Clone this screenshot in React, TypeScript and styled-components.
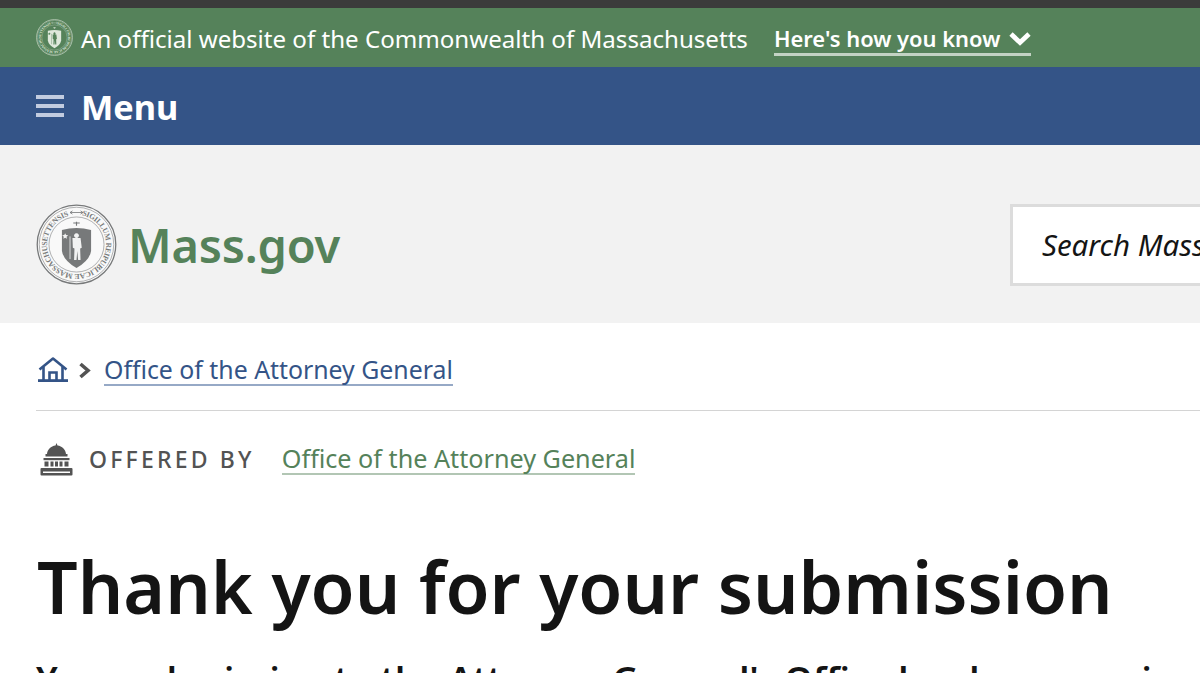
import { FC } from "react";
import styled, { createGlobalStyle } from "styled-components";

const GlobalStyle = createGlobalStyle`
    html, body {
        margin: 0;
        height: 673px;
        overflow: hidden;
        background: #fff;
    }
    body {
        font-family: "Noto Sans", "Open Sans", sans-serif;
        color: #141414;
    }
`;

const Seal: FC<{ size: number; color: string; fill: string; id: string; inner: string }> = ({ size, color, fill, id, inner }) => (
    <svg width={size} height={size} viewBox="0 0 100 100" aria-hidden="true">
        <circle cx="50" cy="50" r="48.5" fill={fill} stroke={color} strokeWidth="1.6" />
        <circle cx="50" cy="50" r="46" fill="none" stroke={color} strokeWidth="0.7" />
        <circle cx="50" cy="50" r="34" fill="none" stroke={color} strokeWidth="0.7" />
        <defs>
            <path id={id} d="M50 13.500a36.500 36.500 0 1 1 -.01 0" />
        </defs>
        <text fontFamily="Liberation Serif, serif" fontSize="9.5" fontWeight="700" fill={color} textLength="212">
            <textPath href={`#${id}`} startOffset="3%" textLength="212">SIGILLUM REIPUBLICAE MASSACHUSETTENSIS</textPath>
        </text>
        <path d="M42 10.500h16M45 8.500l-3 2 3 2M55 8.500l3 2-3 2" fill="none" stroke={color} strokeWidth="1" />
        <path d="M32 32 Q50 27 68 32 L68 58 Q66 70 50 79 Q34 70 32 58 Z" fill={color} />
        <path d="M50 36a3 3 0 1 1 -.01 0Z M45 42h10l1.500 12-2 1 .5 14h-3l-1-11-1 11h-3l.5-14-2-1Z" fill={inner} />
        <path d="M42 40v28" stroke={inner} strokeWidth="1" />
        <path d="M36 36l1.100 2.400 2.600.3-2 1.700.6 2.600-2.300-1.300-2.300 1.300.6-2.600-2-1.700 2.600-.3Z" fill={inner} />
        <path d="M50 27v-5M46 23.500h8" stroke={color} strokeWidth="1.400" />
    </svg>
);

const HomeIcon: FC = () => (
    <svg width="30" height="25" viewBox="0 0 30 25" fill="none" stroke="#345487" strokeWidth="2.600" aria-hidden="true">
        <path d="M1.500 12.500 15 1.500l13.500 11" strokeLinejoin="round" />
        <path d="M5.500 10V23.500M24.500 10V23.500" />
        <path d="M11.500 23.500V15.500h7v8" />
        <path d="M0 23.600h30" strokeWidth="2.800" />
    </svg>
);

const CapitolIcon: FC = () => (
    <svg width="33" height="33" viewBox="0 0 33 33" fill="#535353" aria-hidden="true">
        <path d="M16.500 0l1 2.600c4.600.6 8 4 8.500 8.400h1.500v2.500H5.500V11H7c.5-4.400 3.900-7.800 8.500-8.400Z" />
        <path d="M3.500 15h26v2.200h-26Z" />
        <path d="M4.500 18.500h4v5h-4ZM10.500 18.500h3v5h-3ZM15 18.500h3v5h-3ZM19.500 18.500h3v5h-3ZM24.500 18.500h4v5h-4Z" />
        <path d="M1.500 25h30a1 1 0 0 1 1 1v5.500a1 1 0 0 1-1 1h-30a1 1 0 0 1-1-1V26a1 1 0 0 1 1-1Zm1.500 3.500v1.500h27v-1.500Z" />
    </svg>
);

const App: FC = () => (
    <Page>
        <GlobalStyle />
        <TopEdge />
        <OfficialBar>
            <Seal size={37} color="#dfe8dc" fill="#55825a" id="seal-small" inner="#55825a" />
            <OfficialText>An official website of the Commonwealth of Massachusetts</OfficialText>
            <KnowLink>
                Here's how you know
                <svg width="22" height="15" viewBox="0 0 22 15" fill="none" stroke="#fff" strokeWidth="4.800" aria-hidden="true">
                    <path d="M2 3 11 11.500 20 3" />
                </svg>
            </KnowLink>
        </OfficialBar>
        <MenuBar>
            <Burger>
                <span /><span /><span />
            </Burger>
            <MenuLabel>Menu</MenuLabel>
        </MenuBar>
        <Masthead>
            <Logo>
                <Seal size={81} color="#77797a" fill="#f9f9f9" id="seal-large" inner="#f2f2f2" />
                <LogoText>Mass.gov</LogoText>
            </Logo>
            <SearchBox>Search Mass.gov</SearchBox>
        </Masthead>
        <Content>
            <Breadcrumbs>
                <HomeIcon />
                <svg width="14" height="17" viewBox="0 0 14 17" fill="none" stroke="#535353" strokeWidth="3.600" aria-hidden="true">
                    <path d="M2.500 2 10 8.500 2.500 15" />
                </svg>
                <CrumbLink>Office of the Attorney General</CrumbLink>
            </Breadcrumbs>
            <OfferedRow>
                <CapitolIcon />
                <OfferedLabel>OFFERED BY</OfferedLabel>
                <OfferedLink>Office of the Attorney General</OfferedLink>
            </OfferedRow>
            <Title>Thank you for your submission</Title>
            <Lead>Your submission to the Attorney General's Office has been received</Lead>
        </Content>
    </Page>
);

export default App;

const Page = styled.div`
    width: 1200px;
    height: 673px;
    overflow: hidden;
`;

const TopEdge = styled.div`
    height: 8px;
    background: #3b3b3b;
`;

const OfficialBar = styled.div`
    height: 59px;
    padding-left: 36px;
    display: flex;
    align-items: center;
    background: #55825a;
    color: #fff;
    svg {
        flex: none;
    }
`;

const OfficialText = styled.span`
    margin-left: 8px;
    margin-top: 1px;
    font-size: 24.1px;
    white-space: nowrap;
`;

const KnowLink = styled.span`
    margin-left: 26px;
    display: flex;
    align-items: center;
    gap: 9px;
    height: 30px;
    margin-top: 4px;
    font-size: 21.9px;
    font-weight: 600;
    white-space: nowrap;
    border-bottom: 3px solid #c3d3c4;
`;

const MenuBar = styled.div`
    height: 78px;
    padding-left: 36px;
    display: flex;
    align-items: center;
    gap: 17px;
    background: #345487;
    border-bottom: 1px solid #f2f2f2;
    box-sizing: content-box;
`;

const Burger = styled.div`
    width: 28px;
    display: flex;
    flex-direction: column;
    gap: 5px;
    span {
        height: 4px;
        background: #c2cce0;
    }
`;

const MenuLabel = styled.span`
    color: #fff;
    font-size: 34.3px;
    font-weight: 700;
`;

const Masthead = styled.div`
    height: 177px;
    box-sizing: border-box;
    padding: 20px 0 0 36px;
    display: flex;
    align-items: center;
    background: #f2f2f2;
`;

const Logo = styled.div`
    display: flex;
    align-items: center;
    gap: 11px;
`;

const LogoText = styled.span`
    color: #55825a;
    font-size: 47px;
    font-weight: 600;
    letter-spacing: -0.2px;
`;

const SearchBox = styled.div`
    margin-left: auto;
    margin-right: -220px;
    flex: none;
    width: 410px;
    height: 82px;
    box-sizing: border-box;
    padding-left: 29px;
    display: flex;
    align-items: center;
    background: #fff;
    border: 3px solid #dcdcdc;
    font-size: 29.5px;
    font-style: italic;
    color: #141414;
    white-space: nowrap;
`;

const Content = styled.main`
    padding-left: 36px;
`;

const Breadcrumbs = styled.nav`
    height: 88px;
    box-sizing: border-box;
    padding: 8px 0 0 2px;
    display: flex;
    align-items: center;
    gap: 10px;
    border-bottom: 1px solid #d4d4d4;
    svg:first-child {
        margin-top: -2px;
    }
`;

const CrumbLink = styled.a`
    margin-left: 2px;
    font-size: 24.85px;
    line-height: 29px;
    color: #345487;
    border-bottom: 2px solid #96a9c6;
`;

const OfferedRow = styled.div`
    margin-top: 30px;
    height: 36px;
    display: flex;
    align-items: center;
    padding-left: 4px;
`;

const OfferedLabel = styled.span`
    margin-left: 16px;
    font-size: 23px;
    font-weight: 500;
    letter-spacing: 3.200px;
    color: #535353;
`;

const OfferedLink = styled.a`
    margin-left: 27px;
    font-size: 25.2px;
    line-height: 29px;
    color: #55825a;
    border-bottom: 2px solid #b2c6b4;
`;

const Title = styled.h1`
    margin: 66px 0 0 1px;
    font-size: 71.5px;
    line-height: 88px;
    font-weight: 600;
    color: #141414;
    white-space: nowrap;
`;

const Lead = styled.p`
    margin: 24px 0 0;
    font-size: 36px;
    line-height: 50px;
    font-weight: 600;
    white-space: nowrap;
`;
